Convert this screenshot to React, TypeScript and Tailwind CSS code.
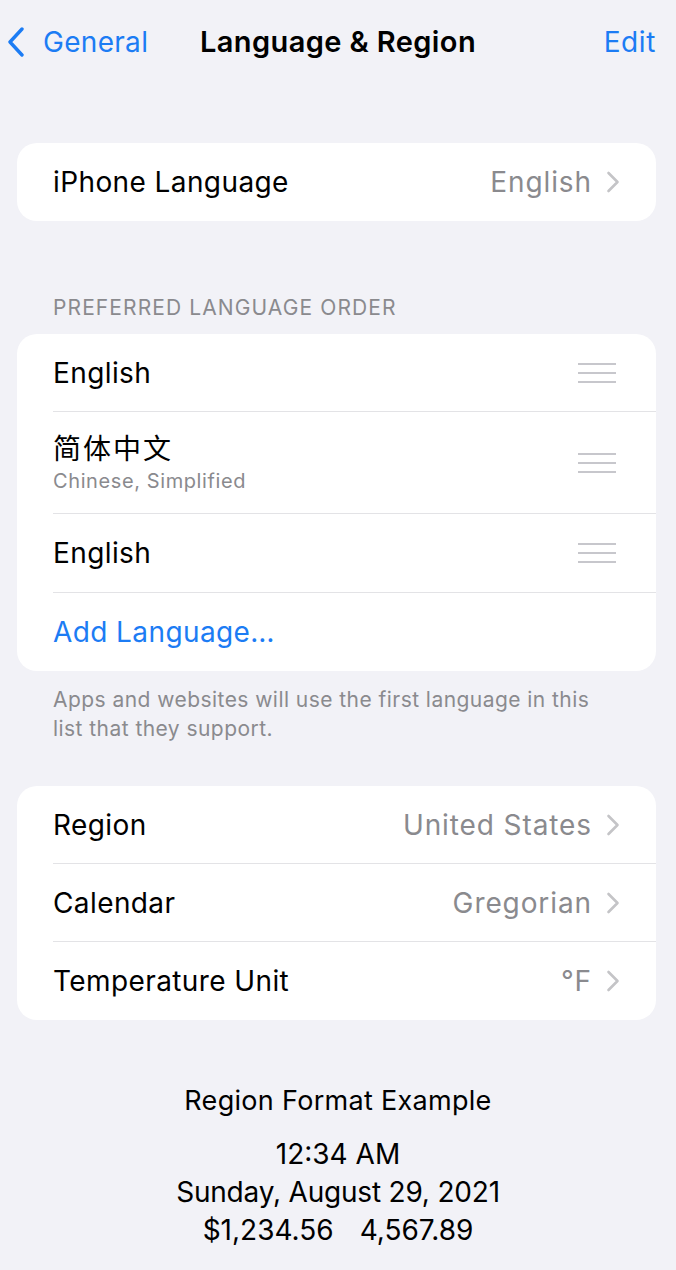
import React from "react";

const font = { fontFamily: "Inter, 'Noto Sans CJK SC', sans-serif" };

const Chevron: React.FC = () => (
  <svg width="14" height="22" viewBox="0 0 14 22" className="ml-[14px] shrink-0">
    <path d="M2.5 2 L11.5 11 L2.5 20" fill="none" stroke="#c4c4c7" strokeWidth="2.6" strokeLinecap="round" strokeLinejoin="round" />
  </svg>
);

const Handle: React.FC = () => (
  <svg width="40" height="22" viewBox="0 0 40 22" className="shrink-0">
    <path d="M1 2 H39 M1 11 H39 M1 20 H39" stroke="#c7c7cc" strokeWidth="2.2" />
  </svg>
);

const ValueRow: React.FC<{ label: string; value: string; last?: boolean }> = ({ label, value, last }) => (
  <div className="pl-9">
    <div className={`flex items-center h-[78px] pr-9 ${last ? "" : "border-b border-[#e3e3e6]"}`}>
      <span className="flex-1 text-[28px] text-black tracking-[0.4px]">{label}</span>
      <span className="text-[28px] text-[#8a8a8e] tracking-[0.9px]">{value}</span>
      <Chevron />
    </div>
  </div>
);

export default function App() {
  const regionRows = [
    { label: "Region", value: "United States" },
    { label: "Calendar", value: "Gregorian" },
    { label: "Temperature Unit", value: "°F" },
  ];

  return (
    <div className="min-h-[1270px] bg-[#f2f2f7] text-black" style={font}>
      {/* Nav bar */}
      <div className="relative flex items-center h-[84px] px-[6px]">
        <div className="flex items-center text-[#1c7cf4]">
          <svg width="20" height="30" viewBox="0 0 20 30">
            <path d="M16 2 L4 15 L16 28" fill="none" stroke="#1c7cf4" strokeWidth="3.4" strokeLinecap="round" strokeLinejoin="round" />
          </svg>
          <span className="ml-[17px] text-[28px] tracking-[0.3px]">General</span>
        </div>
        <div className="absolute left-0 right-0 text-center text-[29px] font-semibold tracking-[0.4px] pointer-events-none">
          Language &amp; Region
        </div>
        <span className="ml-auto mr-[14px] text-[28px] text-[#1c7cf4] tracking-[0.6px]">Edit</span>
      </div>

      <div className="pl-[17px] pr-[20px]">
        {/* iPhone Language */}
        <div className="mt-[59px] bg-white rounded-[20px] overflow-hidden">
          <ValueRow label="iPhone Language" value="English" last />
        </div>

        {/* Preferred language order */}
        <div className="mt-[74px] pl-9 text-[21px] text-[#8a8a8e] tracking-[1.1px] leading-[26px]">
          PREFERRED LANGUAGE ORDER
        </div>
        <div className="mt-[13px] bg-white rounded-[20px] overflow-hidden">
          <div className="pl-9">
            <div className="flex items-center h-[78px] pr-[39px] border-b border-[#e3e3e6]">
              <span className="flex-1 text-[28px] tracking-[0.4px]">English</span>
              <Handle />
            </div>
          </div>
          <div className="pl-9">
            <div className="flex items-center h-[102px] pr-[39px] border-b border-[#e3e3e6]">
              <div className="flex-1 flex flex-col">
                <span className="text-[28px] leading-[36px] tracking-[2px]">简体中文</span>
                <span className="text-[20px] leading-[28px] text-[#8a8a8e] tracking-[0.6px]">Chinese, Simplified</span>
              </div>
              <Handle />
            </div>
          </div>
          <div className="pl-9">
            <div className="flex items-center h-[79px] pr-[39px] border-b border-[#e3e3e6]">
              <span className="flex-1 text-[28px] tracking-[0.4px]">English</span>
              <Handle />
            </div>
          </div>
          <div className="pl-9">
            <div className="flex items-center h-[78px]">
              <span className="text-[28px] text-[#1c7cf4] tracking-[0.4px]">Add Language…</span>
            </div>
          </div>
        </div>
        <p className="mt-[14px] pl-9 pr-9 text-[21px] leading-[29px] text-[#8a8a8e] tracking-[0.45px]">
          Apps and websites will use the first language in this list that they support.
        </p>

        {/* Region settings */}
        <div className="mt-[43px] bg-white rounded-[20px] overflow-hidden">
          {regionRows.map((r, i) => (
            <ValueRow key={r.label} label={r.label} value={r.value} last={i === regionRows.length - 1} />
          ))}
        </div>

        {/* Region format example */}
        <div className="mt-[64px] -mr-[3px] flex flex-col items-center text-center">
          <div className="text-[27px] leading-[34px] tracking-[0.3px]">Region Format Example</div>
          <div className="mt-[17px] text-[28px] leading-[38px]">
            <div>12:34 AM</div>
            <div className="tracking-[-0.2px]">Sunday, August 29, 2021</div>
            <div>
              $1,234.56<span className="inline-block w-[26px]" />4,567.89
            </div>
          </div>
        </div>
      </div>
    </div>
  );
}
